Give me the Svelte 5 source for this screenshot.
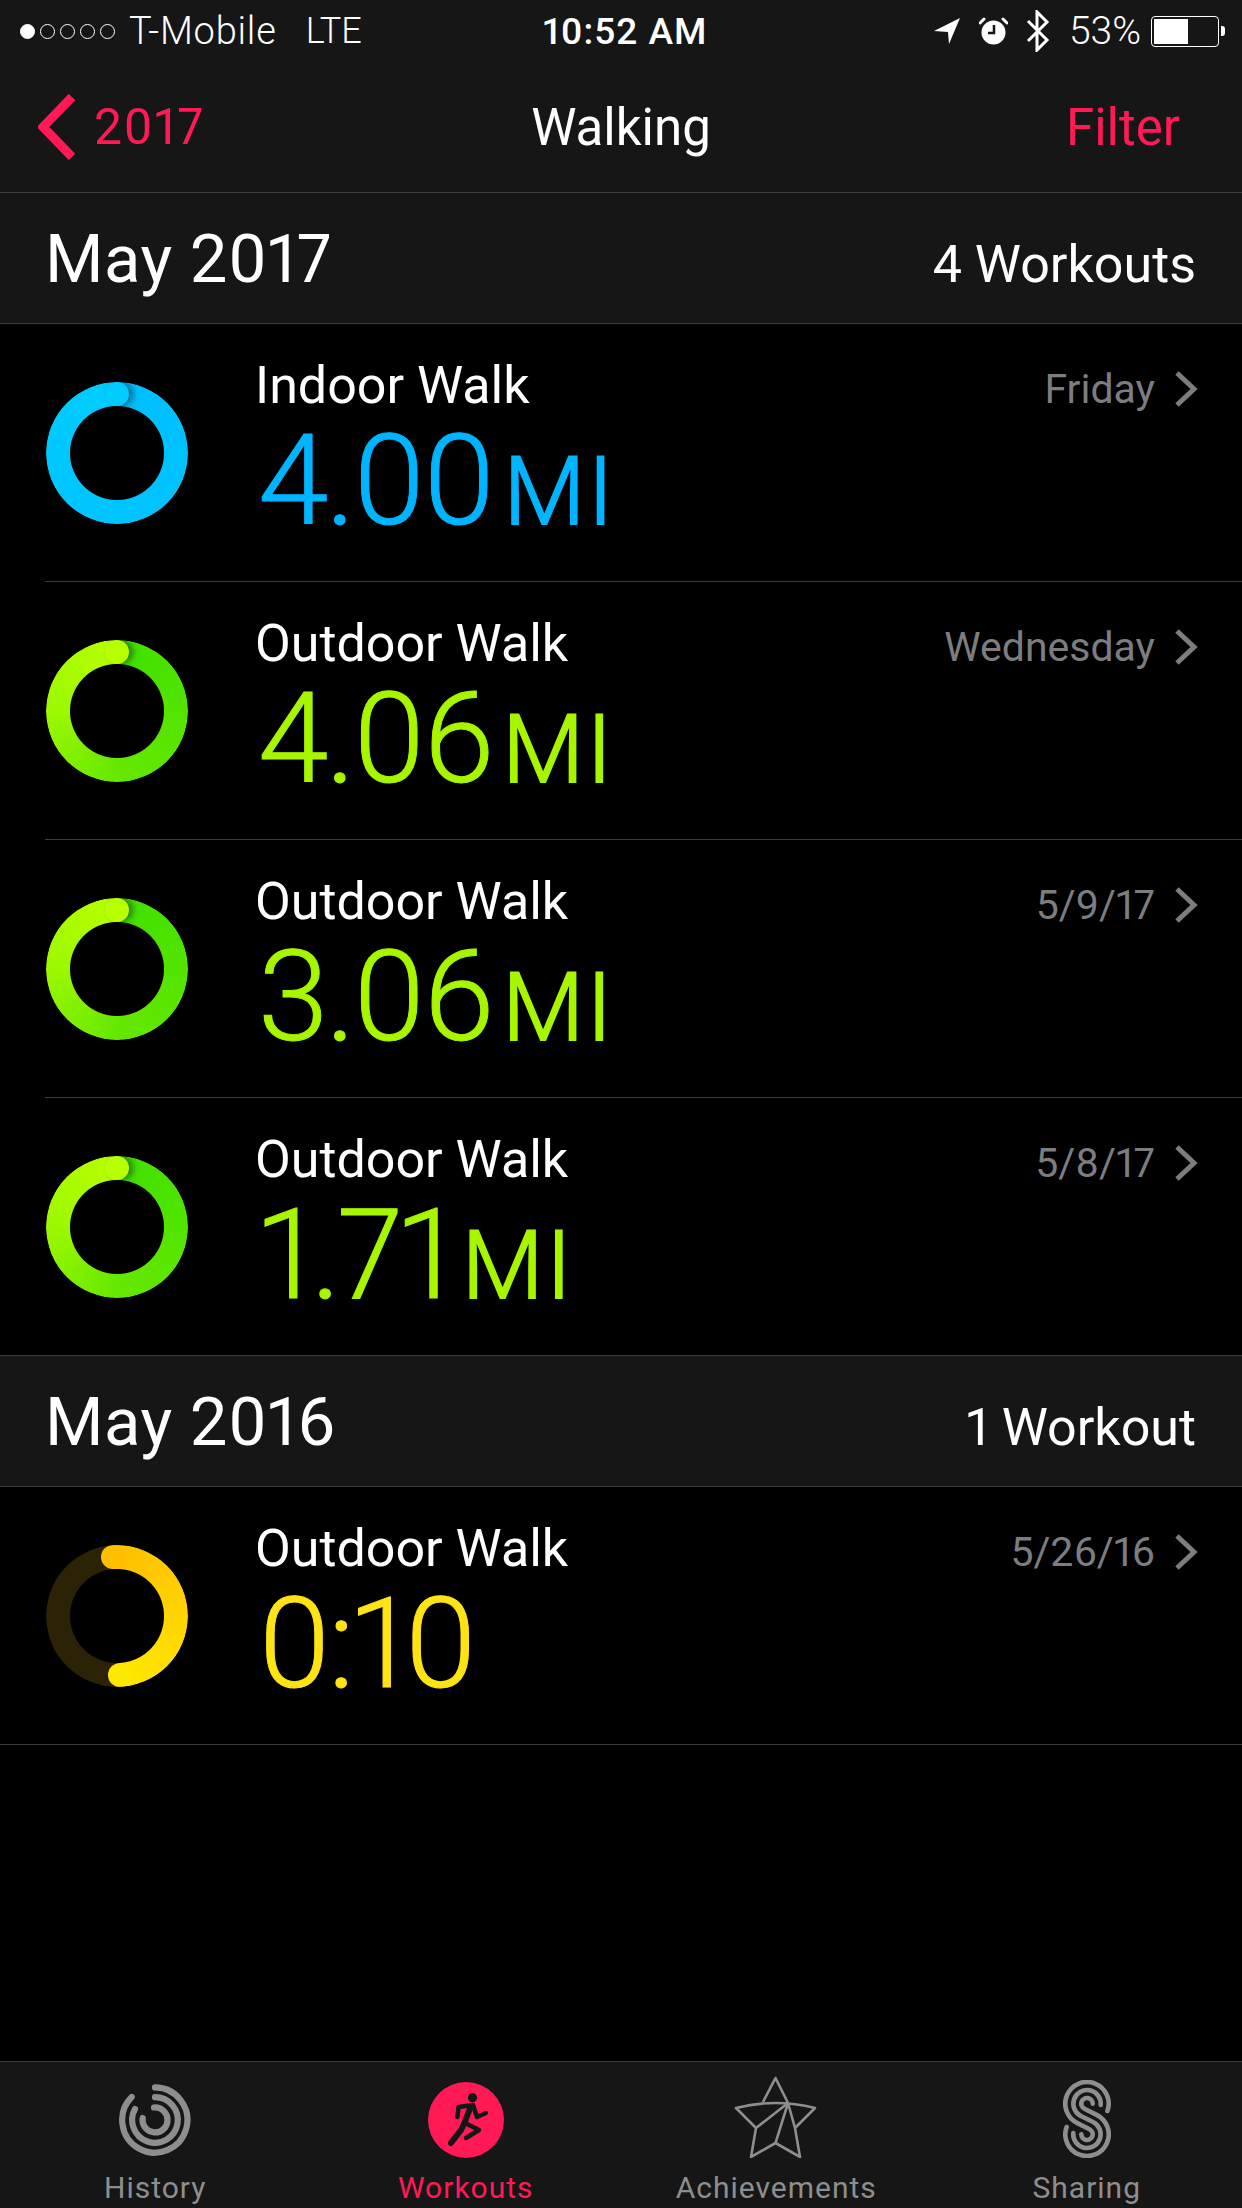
<script>
	const sections = [
		{
			month: 'May 2017',
			count: '4 Workouts',
			rows: [
				{ title: 'Indoor Walk', value: '4.00', unit: 'MI', date: 'Friday', tone: 'blue' },
				{ title: 'Outdoor Walk', value: '4.06', unit: 'MI', date: 'Wednesday', tone: 'green' },
				{ title: 'Outdoor Walk', value: '3.06', unit: 'MI', date: '5/9/17', tone: 'green' },
				{ title: 'Outdoor Walk', value: '1.71', unit: 'MI', date: '5/8/17', tone: 'green' }
			]
		},
		{
			month: 'May 2016',
			count: '1 Workout',
			rows: [{ title: 'Outdoor Walk', value: '0:10', unit: '', date: '5/26/16', tone: 'yellow' }]
		}
	];
</script>

<div class="screen">
	<header class="top">
		<div class="status">
			<div class="carrier">
				<span class="dot on"></span>
				<span class="dot"></span>
				<span class="dot"></span>
				<span class="dot"></span>
				<span class="dot"></span>
				<span class="name">T-Mobile</span>
				<span class="net">LTE</span>
			</div>
			<div class="time">10:52 AM</div>
			<div class="sys">
				<svg class="loc" width="26" height="26" viewBox="0 0 26 26">
					<path d="M26 0 L0 13 L14 14 L15 26 Z" fill="#fff" />
				</svg>
				<svg class="alarm" width="29" height="28" viewBox="0 0 29 28">
					<circle cx="14.5" cy="15.5" r="12" fill="#fff" />
					<path d="M1 6 L5 2 M28 6 L24 2" stroke="#fff" stroke-width="3" stroke-linecap="round" />
					<path d="M15 8 V16 H9" stroke="#161616" stroke-width="2.5" fill="none" />
				</svg>
				<svg class="bt" width="24" height="42" viewBox="0 0 24 42">
					<path d="M2 11 L21 30 L11 40 V2 L21 12 L2 31" stroke="#fff" stroke-width="3" fill="none" />
				</svg>
				<span class="pct">53%</span>
				<div class="battery">
					<div class="level"></div>
				</div>
				<div class="nub"></div>
			</div>
		</div>
		<nav class="nav">
			<div class="back">
				<svg width="38" height="66" viewBox="0 0 38 66">
					<path d="M34 3 L5 33 L34 63" stroke="#ff1a55" stroke-width="9" fill="none" />
				</svg>
				<span>2017</span>
			</div>
			<div class="title">Walking</div>
			<div class="filter">Filter</div>
		</nav>
	</header>

	<main class="list">
		{#each sections as section}
			<div class="section-head">
				<span class="month">{section.month}</span>
				<span class="count">{section.count}</span>
			</div>
			{#each section.rows as row, i}
				<div class="row {row.tone}" class:last={i === section.rows.length - 1}>
					<div class="ring">
						{#if row.tone === 'yellow'}
							<div class="cap start"></div>
							<div class="cap end"></div>
						{:else}
							<div class="cap"></div>
						{/if}
					</div>
					<div class="info">
						<div class="name">{row.title}</div>
						<div class="value">{row.value}<span class="unit">{row.unit}</span></div>
					</div>
					<div class="when">
						<span>{row.date}</span>
						<svg width="26" height="38" viewBox="0 0 26 38">
							<path d="M4 3 L21 19 L4 35" stroke="#7d7d80" stroke-width="5" fill="none" />
						</svg>
					</div>
				</div>
			{/each}
		{/each}
	</main>

	<footer class="tabs">
		<div class="tab">
			<svg width="72" height="76" viewBox="0 0 72 76">
				<g fill="none" stroke="#8e8e8e" stroke-width="6.2" stroke-linecap="round" transform="translate(0 2)">
					<path d="M36 3.4 A32.6 32.6 0 1 1 12.7 13" />
					<path d="M36 13.2 A22.8 22.8 0 1 1 16 25" />
					<path d="M35 23.5 A12.5 12.5 0 1 1 23.7 34" />
				</g>
			</svg>
			<span>History</span>
		</div>
		<div class="tab active">
			<svg width="76" height="76" viewBox="0 0 76 76">
				<circle cx="38" cy="38" r="38" fill="#ff1a55" />
				<circle cx="44.5" cy="15.7" r="4.6" fill="#161616" />
				<g fill="none" stroke="#161616" stroke-linecap="round" stroke-linejoin="round">
					<path d="M29.4 35 L30.6 25 L45 23" stroke-width="4.5" />
					<path d="M45 23 L49 35 L58 31" stroke-width="4.5" />
					<path d="M43 24 L36 42 L33 48 L23 61" stroke-width="6" />
					<path d="M37 41 L51 48 L38 56" stroke-width="4.5" />
				</g>
			</svg>
			<span>Workouts</span>
		</div>
		<div class="tab">
			<svg width="84" height="82" viewBox="0 0 84 82">
				<g fill="none" stroke="#8e8e8e" stroke-width="2.6" stroke-linejoin="round">
					<path d="M29 26 L41.5 2 L54 27" />
					<path d="M2 32 Q41 22 81 32 L61 52 L66 81 L41.5 67 L17 81 L22 52 Z" />
					<path d="M54 27 L22 52" />
					<path d="M54 27 L41.5 67" />
					<path d="M54 27 L61 52" />
				</g>
			</svg>
			<span>Achievements</span>
		</div>
		<div class="tab">
			<svg width="48" height="78" viewBox="0 0 48 78">
				<g fill="none" stroke="#8e8e8e" stroke-width="4.6" stroke-linecap="round">
					<path d="M44.4 31 A21.7 21.7 0 1 0 14.34 43.12 L26.54 49.2 A5.7 5.7 0 1 1 18.3 54.3" />
					<path d="M37.7 25 A13.7 13.7 0 1 0 17.9 35.96 L30.1 42.04 A13.7 13.7 0 1 1 10.3 53" />
					<path d="M29.7 23.7 A5.7 5.7 0 1 0 21.46 28.8 L33.66 34.88 A21.7 21.7 0 1 1 3.6 47" />
				</g>
			</svg>
			<span>Sharing</span>
		</div>
	</footer>
</div>

<style>
	:global(body) {
		margin: 0;
		background: #000;
	}

	.screen {
		display: flex;
		flex-direction: column;
		width: 1242px;
		height: 2208px;
		overflow: hidden;
		background: #000;
		color: #fff;
		font-family: Roboto, 'Liberation Sans', sans-serif;
		font-weight: 400;
		font-feature-settings: 'pnum';
	}

	.top {
		background: #161616;
		height: 192px;
		border-bottom: 1px solid #3c3c3c;
		flex-shrink: 0;
	}

	.status {
		display: grid;
		grid-template-columns: 1fr auto 1fr;
		align-items: center;
		height: 62px;
		font-size: 38px;
		font-weight: 300;
	}

	.carrier {
		display: flex;
		align-items: center;
		padding-left: 20px;
		gap: 5px;
	}

	.dot {
		width: 13px;
		height: 13px;
		border: 1.5px solid #fff;
		border-radius: 50%;
	}

	.dot.on {
		background: #fff;
	}

	.carrier .name {
		margin-left: 9px;
		letter-spacing: 0.8px;
	}

	.carrier .net {
		margin-left: 24px;
		font-size: 36px;
	}

	.time {
		margin-left: 8px;
		font-size: 37px;
		font-weight: 500;
		letter-spacing: 1px;
	}

	.sys {
		display: flex;
		align-items: center;
		justify-content: flex-end;
		padding-right: 17px;
	}

	.sys .alarm {
		margin-left: 19px;
	}

	.sys .bt {
		margin-left: 18px;
	}

	.pct {
		margin-left: 19px;
		font-size: 39px;
	}

	.battery {
		margin-left: 10px;
		width: 62px;
		height: 25px;
		padding: 2px;
		border: 1px solid #fff;
		border-radius: 4px;
	}

	.level {
		width: 34px;
		height: 25px;
		background: #fff;
	}

	.nub {
		width: 4px;
		height: 10px;
		margin-left: 2px;
		background: #fff;
		border-radius: 0 3px 3px 0;
	}

	.nav {
		display: grid;
		grid-template-columns: 1fr auto 1fr;
		align-items: center;
		height: 130px;
		font-size: 51px;
	}

	.back {
		display: flex;
		align-items: center;
		gap: 18px;
		padding-left: 38px;
		font-size: 50px;
		letter-spacing: 1.5px;
		color: #ff1a55;
	}

	.filter {
		justify-self: end;
		padding-right: 62px;
		color: #ff1a55;
	}

	.section-head {
		display: flex;
		align-items: center;
		justify-content: space-between;
		height: 130px;
		padding: 0 46px 0 45px;
		background: #161616;
		border-bottom: 1px solid #3c3c3c;
	}

	.month {
		font-size: 67px;
		letter-spacing: 0.5px;
		padding-top: 2px;
	}

	.count {
		font-size: 52px;
		padding-top: 12px;
	}

	.row {
		display: flex;
		height: 257px;
		margin-left: 45px;
		border-bottom: 1px solid #3c3c3c;
	}

	.row.last {
		margin-left: 0;
		padding-left: 45px;
	}

	.ring {
		position: relative;
		width: 142px;
		height: 142px;
		margin: 58px 0 0 1px;
		border-radius: 50%;
		-webkit-mask: radial-gradient(circle, transparent 46.5px, #000 47.5px);
		mask: radial-gradient(circle, transparent 46.5px, #000 47.5px);
	}

	.blue .ring {
		background: conic-gradient(#00bfff, #00c4ff 50%, #00ccff);
	}

	.green .ring {
		background: conic-gradient(#3fe000, #66e800 50%, #9cf800 75%, #b8ff00);
	}

	.yellow .ring {
		background: conic-gradient(from -4deg, #ffbe00, #ffe800 180deg, #2c2205 180deg);
	}

	.cap {
		position: absolute;
		left: 59px;
		top: 0;
		width: 24px;
		height: 24px;
		border-radius: 50%;
		box-shadow: 4px 0 6px rgba(0, 0, 0, 0.45);
	}

	.blue .cap {
		background: #00ccff;
	}

	.green .cap {
		background: #b8ff00;
	}

	.yellow .cap {
		box-shadow: none;
		background: #ffbe00;
	}

	.yellow .cap.start {
		left: 55px;
	}

	.yellow .cap.end {
		left: 62px;
		top: 118px;
		background: #ffe800;
	}

	.info {
		margin-left: 67px;
		flex: 1;
	}

	.info .name {
		margin-top: 32px;
		font-size: 52px;
		line-height: 60px;
	}

	.value {
		margin: 0 0 0 3px;
		font-size: 127px;
		line-height: 130px;
		font-weight: 300;
		letter-spacing: -3px;
		-webkit-text-stroke: 1px currentColor;
		white-space: nowrap;
	}

	.unit {
		margin-left: 11px;
		font-size: 94px;
		letter-spacing: 3px;
		-webkit-text-stroke: 2px currentColor;
	}

	.blue .value {
		color: #00b4ff;
	}

	.green .value {
		color: #a8f500;
	}

	.yellow .value {
		color: #ffe314;
	}

	.when {
		display: flex;
		align-items: center;
		align-self: flex-start;
		gap: 18px;
		margin-top: 41px;
		padding-right: 43px;
		font-size: 41px;
		color: #7d7d80;
	}

	.tabs {
		display: grid;
		grid-template-columns: repeat(4, 1fr);
		height: 146px;
		margin-top: auto;
		background: #161616;
		border-top: 1px solid #3c3c3c;
		flex-shrink: 0;
	}

	.tab {
		display: flex;
		flex-direction: column;
		align-items: center;
		justify-content: flex-end;
		gap: 12px;
		padding-bottom: 3px;
		font-size: 30px;
		letter-spacing: 1px;
		color: #8e8e8e;
	}

	.tab.active {
		color: #ff1a55;
	}
</style>
